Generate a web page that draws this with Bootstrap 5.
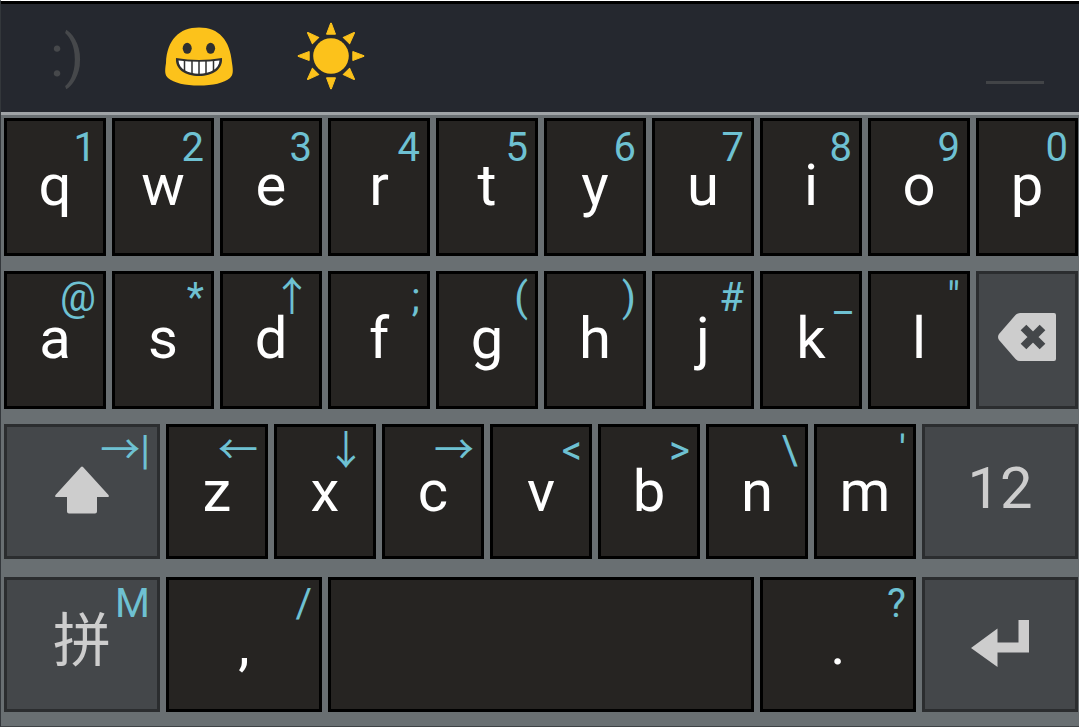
<!DOCTYPE html>
<html lang="en">
<head>
<meta charset="utf-8">
<meta name="viewport" content="width=device-width, initial-scale=1">
<title>Keyboard</title>
<link href="https://cdn.jsdelivr.net/npm/bootstrap@5.3.0/dist/css/bootstrap.min.css" rel="stylesheet">
<style>
  body { background: #696f72; font-family: Roboto, "Noto Sans CJK SC", sans-serif; }
  .board { border-left: 1px solid #33373b; border-bottom: 1px solid #3f4346; }
  .suggest { height: 114px; padding-bottom: 4px; background: #25282f; border-top: 3px solid #000; border-bottom: 3px solid #a0a4a7; box-shadow: 0 -1px 0 #fff; margin-top: 1px; }
  .pick { width: 132px; font-size: 58px; line-height: 104px; color: #46484b; }
  .pick.last { width: 128px; }
  .dash { width: 58px; height: 3px; background: #424447; margin-top: 52px; }
  .keys { padding: 3px 1px 14px 3px; }
  .keyrow { display: grid; grid-template-columns: repeat(20, minmax(0, 1fr)); column-gap: 6px; margin-bottom: 15px; }
  .keyrow:nth-child(3) { margin-bottom: 18px; }
  .keyrow:last-child { margin-bottom: 0; }
  .key { display: flex; justify-content: center; align-items: flex-start; grid-column: span 2; height: 138px; padding: 0; border: 3px solid #000; background: #262422; color: #fff; overflow: hidden; }
  .low .key { height: 135px; }
  .key.wide { grid-column: span 3; }
  .key.space { grid-column: span 8; }
  .key.fn { background: #44474a; border-color: #2b2d2f; color: #cdcdcd; }
  .face { height: 128px; font-size: 58px; line-height: 128px; }
  .fn .face { height: 122px; line-height: 122px; }
  .fn .face.icon { height: 126px; }
  .hint { top: 2px; right: 7px; font-size: 40px; line-height: 44px; color: #6ec1d2; }
  .digits .hint { top: 5px; }
</style>
</head>
<body>
<main class="board">
  <div class="suggest d-flex align-items-center">
    <button class="pick btn p-0 border-0" aria-label="Emoticons">:)</button>
    <button class="pick btn p-0 border-0 d-flex justify-content-center" aria-label="Grinning face">
      <svg width="70" height="60" viewBox="164 26 70 60">
        <path d="M199 27.500C219 27.500 230 40 232 63C233.500 72 233 75 230 78C224 83 213 85.500 199 85.500S174 83 168 78C165 75 164.500 72 166 63C167 40 179 27.500 199 27.500Z" fill="#fcc21b"/>
        <ellipse cx="187.200" cy="48.300" rx="4.500" ry="5.500" fill="#2f2f2f"/>
        <ellipse cx="210.600" cy="48.300" rx="4.500" ry="5.500" fill="#2f2f2f"/>
        <path d="M176 58Q199 62 222 58C223 69 213 76 199 76S175 69 176 58Z" fill="#2f2f2f"/>
        <path d="M178.500 60.500Q199 63 219.500 60.500C219 69 210 73.700 199 73.700S179 69 178.500 60.500Z" fill="#fff"/>
        <path d="M184.500 60V72M192 60V75M199 60V75M206 60V75M213.500 60V72" stroke="#2f2f2f" stroke-width="1.500"/>
      </svg>
    </button>
    <button class="pick btn p-0 border-0 d-flex justify-content-center" aria-label="Sun">
      <svg width="68" height="68" viewBox="-34 -34 68 68" fill="#fcc21b" stroke="#fcc21b" stroke-linejoin="round">
        <defs><path id="ray" d="M-4.500-21.800L-.300-33H.300L4.500-21.800Z"/></defs>
        <circle r="17.800" stroke="none"/>
        <use href="#ray"/><use href="#ray" transform="rotate(45)"/><use href="#ray" transform="rotate(90)"/><use href="#ray" transform="rotate(135)"/>
        <use href="#ray" transform="rotate(180)"/><use href="#ray" transform="rotate(225)"/><use href="#ray" transform="rotate(270)"/><use href="#ray" transform="rotate(315)"/>
      </svg>
    </button>
    <button class="pick last btn p-0 border-0 ms-auto d-flex justify-content-center" aria-label="Space"><span class="dash"></span></button>
  </div>

  <div class="keys">
    <div class="keyrow digits">
      <button class="key position-relative"><span class="hint position-absolute">1</span><span class="face">q</span></button>
      <button class="key position-relative"><span class="hint position-absolute">2</span><span class="face">w</span></button>
      <button class="key position-relative"><span class="hint position-absolute">3</span><span class="face">e</span></button>
      <button class="key position-relative"><span class="hint position-absolute">4</span><span class="face">r</span></button>
      <button class="key position-relative"><span class="hint position-absolute">5</span><span class="face">t</span></button>
      <button class="key position-relative"><span class="hint position-absolute">6</span><span class="face">y</span></button>
      <button class="key position-relative"><span class="hint position-absolute">7</span><span class="face">u</span></button>
      <button class="key position-relative"><span class="hint position-absolute">8</span><span class="face">i</span></button>
      <button class="key position-relative"><span class="hint position-absolute">9</span><span class="face">o</span></button>
      <button class="key position-relative"><span class="hint position-absolute">0</span><span class="face">p</span></button>
    </div>
    <div class="keyrow">
      <button class="key position-relative"><span class="hint position-absolute">@</span><span class="face">a</span></button>
      <button class="key position-relative"><span class="hint position-absolute">*</span><span class="face">s</span></button>
      <button class="key position-relative"><span class="hint position-absolute">↑</span><span class="face">d</span></button>
      <button class="key position-relative"><span class="hint position-absolute">;</span><span class="face">f</span></button>
      <button class="key position-relative"><span class="hint position-absolute">(</span><span class="face">g</span></button>
      <button class="key position-relative"><span class="hint position-absolute">)</span><span class="face">h</span></button>
      <button class="key position-relative"><span class="hint position-absolute">#</span><span class="face">j</span></button>
      <button class="key position-relative"><span class="hint position-absolute">_</span><span class="face">k</span></button>
      <button class="key position-relative"><span class="hint position-absolute">"</span><span class="face">l</span></button>
      <button class="key fn" aria-label="Delete">
        <span class="face icon d-flex align-items-center">
          <svg width="58" height="50" viewBox="0 0 58 50"><path d="M22 1H56Q58 1 58 3V47Q58 49 56 49H22Q19.500 49 17.500 47L1 28Q-1 25 1 22L17.500 3Q19.500 1 22 1Z" fill="#cdcdcd"/><path d="M25.500 15.500L44.500 34.500M44.500 15.500L25.500 34.500" stroke="#44474a" stroke-width="8"/></svg>
        </span>
      </button>
    </div>
    <div class="keyrow low">
      <button class="key fn wide position-relative" aria-label="Shift"><span class="hint position-absolute">→|</span>
        <span class="face icon d-flex align-items-center">
          <svg width="54" height="48" viewBox="0 0 54 48"><path d="M26 1Q27 0 28 1L53.500 29Q54.500 31 53 31H42V45.500Q42 47.500 40 47.500H14Q12 47.500 12 45.500V31H1Q-.500 31 .500 29Z" fill="#cdcdcd"/></svg>
        </span>
      </button>
      <button class="key position-relative"><span class="hint position-absolute">←</span><span class="face">z</span></button>
      <button class="key position-relative"><span class="hint position-absolute">↓</span><span class="face">x</span></button>
      <button class="key position-relative"><span class="hint position-absolute">→</span><span class="face">c</span></button>
      <button class="key position-relative"><span class="hint position-absolute">&lt;</span><span class="face">v</span></button>
      <button class="key position-relative"><span class="hint position-absolute">&gt;</span><span class="face">b</span></button>
      <button class="key position-relative"><span class="hint position-absolute">\</span><span class="face">n</span></button>
      <button class="key position-relative"><span class="hint position-absolute">'</span><span class="face">m</span></button>
      <button class="key fn wide"><span class="face">12</span></button>
    </div>
    <div class="keyrow low">
      <button class="key fn wide position-relative" lang="zh-CN"><span class="hint position-absolute">M</span><span class="face">拼</span></button>
      <button class="key wide position-relative"><span class="hint position-absolute">/</span><span class="face">,</span></button>
      <button class="key space" aria-label="Space bar"></button>
      <button class="key wide position-relative"><span class="hint position-absolute">?</span><span class="face">.</span></button>
      <button class="key fn wide" aria-label="Enter">
        <span class="face icon d-flex align-items-center">
          <svg width="58" height="47" viewBox="0 0 58 47"><path d="M0 28L26.500 8.500V22.500H47.500V0H58V32.500H26.500V47Z" fill="#cdcdcd"/></svg>
        </span>
      </button>
    </div>
  </div>
</main>
<script src="https://cdn.jsdelivr.net/npm/bootstrap@5.3.0/dist/js/bootstrap.bundle.min.js"></script>
</body>
</html>
